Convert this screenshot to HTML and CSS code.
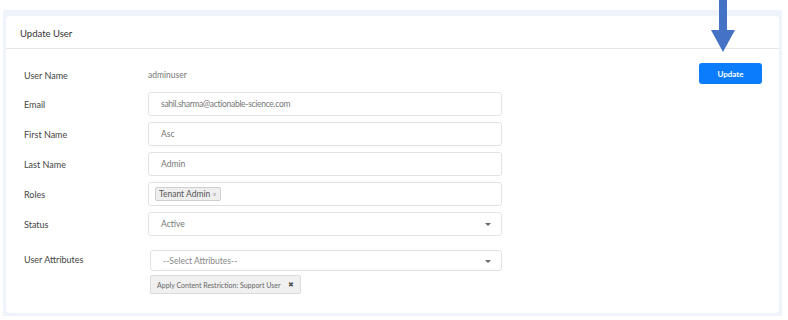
FILE: index.html
```html
<!DOCTYPE html>
<html lang="en">
<head>
    <meta charset="UTF-8">
    <title>Update User</title>
    <link rel="stylesheet" href="styles.css">
</head>
<body>
    <div class="page">
        <div class="card">
            <div class="card-header">Update User</div>
            <div class="card-body">
                <div class="form-row first-row">
                    <label class="field-label">User Name</label>
                    <div class="static-value">adminuser</div>
                    <button class="update-btn">Update</button>
                </div>
                <div class="form-row">
                    <label class="field-label">Email</label>
                    <div class="input email">sahil.sharma@actionable-science.com</div>
                </div>
                <div class="form-row">
                    <label class="field-label">First Name</label>
                    <div class="input">Asc</div>
                </div>
                <div class="form-row">
                    <label class="field-label">Last Name</label>
                    <div class="input">Admin</div>
                </div>
                <div class="form-row">
                    <label class="field-label">Roles</label>
                    <div class="input multi">
                        <span class="chip">Tenant Admin <span class="chip-x">×</span></span>
                    </div>
                </div>
                <div class="form-row">
                    <label class="field-label">Status</label>
                    <div class="input select">Active <span class="caret"></span></div>
                </div>
                <div class="form-row attr-row">
                    <label class="field-label">User Attributes</label>
                    <div class="attr-field">
                        <div class="input select attr-select">--Select Attributes-- <span class="caret"></span></div>
                        <span class="attr-tag">Apply Content Restriction: Support User <span class="tag-x">✖</span></span>
                    </div>
                </div>
            </div>
        </div>
        <!-- callout arrow pointing at the button -->
        <svg class="callout" width="26" height="54" viewBox="0 0 26 54">
            <rect x="8" y="0" width="8" height="31" fill="#4472c4"/>
            <polygon points="0,30 24,30 12,52" fill="#4472c4"/>
        </svg>
    </div>
</body>
</html>
```

FILE: styles.css
```css
* {
    margin: 0;
    padding: 0;
    box-sizing: border-box;
}

body {
    font-family: Lato, 'Open Sans', sans-serif;
    background: #fff;
    color: #444;
}

.page {
    position: relative;
    margin: 10px 6px 0 3px;
    height: 306px;
    padding: 6px 3px 3px 3px;
    background: #eef3fc;
}

.card {
    background: #fff;
    border-radius: 4px;
    height: 297px;
}

.card-header {
    height: 33px;
    padding: 12px 14px 0;
    font-size: 9.5px;
    color: #333;
    border-bottom: 1px solid #e6e6e6;
}

.card-body {
    padding: 14px 17px 0 18px;
}

.form-row {
    display: flex;
    align-items: center;
    margin-bottom: 6px;
}

.field-label {
    width: 124px;
    flex-shrink: 0;
    font-size: 9px;
    color: #444;
}

.first-row {
    height: 21px;
    margin-bottom: 8px;
}

.first-row .field-label,
.static-value {
    padding-top: 3px;
}

.static-value {
    flex: 1;
    font-size: 8.5px;
    color: #777;
}

.update-btn {
    width: 63px;
    height: 21px;
    border: none;
    border-radius: 3px;
    background: #0b7dfc;
    color: #fff;
    font-family: inherit;
    font-size: 8px;
    font-weight: 700;
}

.input {
    position: relative;
    width: 354px;
    height: 24px;
    border: 1px solid #e2e2e2;
    border-radius: 3px;
    padding: 0 12px;
    font-size: 8.5px;
    color: #777;
    display: flex;
    align-items: center;
}

.input.email {
    letter-spacing: -0.3px;
}

.input.multi {
    padding-left: 6px;
}

.chip {
    background: #efefef;
    border: 1px solid #cfcfcf;
    border-radius: 2px;
    padding: 1px 3px;
    font-size: 8.5px;
    color: #555;
}

.chip-x {
    color: #999;
    font-size: 7px;
}

.caret {
    position: absolute;
    right: 10px;
    top: 50%;
    margin-top: -1px;
    border-left: 3px solid transparent;
    border-right: 3px solid transparent;
    border-top: 3px solid #666;
}

.attr-row {
    align-items: flex-start;
    margin-top: 14px;
}

.attr-row .field-label {
    padding-top: 4px;
}

.attr-field {
    display: flex;
    flex-direction: column;
    align-items: flex-start;
    gap: 4px;
    padding-left: 2px;
}

.attr-select {
    width: 352px;
    height: 21px;
    color: #888;
}

.attr-tag {
    background: #f0f0f0;
    border: 1px solid #dcdcdc;
    border-radius: 2px;
    padding: 0 6px;
    height: 19px;
    display: inline-flex;
    align-items: center;
    font-size: 7px;
    color: #666;
}

.tag-x {
    margin-left: 8px;
    color: #555;
    font-size: 7px;
}

.callout {
    position: absolute;
    left: 708px;
    top: -10px;
}
```
